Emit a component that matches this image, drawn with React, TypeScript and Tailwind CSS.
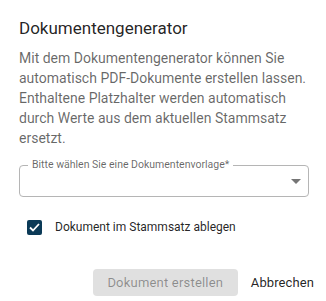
import React from "react";

const App = () => {
  return (
    <div
      className="h-[301px] w-[326px] overflow-hidden bg-white text-[rgba(0,0,0,0.87)]"
      style={{ fontFamily: "Roboto, 'Liberation Sans', sans-serif" }}
    >
      <div className="pl-[19px] pr-[14px] pt-[16px]">
        <h2 className="text-[17px] leading-[24px] font-normal">Dokumentengenerator</h2>

        <p className="mt-[8px] text-[14px] leading-[20px] text-[rgba(0,0,0,0.6)]">
          Mit dem Dokumentengenerator können Sie automatisch PDF-Dokumente erstellen lassen.
          Enthaltene Platzhalter werden automatisch durch Werte aus dem aktuellen Stammsatz
          ersetzt.
        </p>

        {/* Select */}
        <div className="relative mt-[17px] h-[32px] w-[290px] rounded-[4px] border border-[#b5b5b5]">
          <span className="absolute -top-[8px] left-[8px] bg-white px-[4px] text-[10.5px] leading-[14px] text-[rgba(0,0,0,0.6)]">
            Bitte wählen Sie eine Dokumentenvorlage*
          </span>
          <svg
            className="absolute right-[7px] top-[13px]"
            width="10"
            height="5"
            viewBox="0 0 10 5"
          >
            <path d="M0 0 L10 0 L5 5 Z" fill="#757575" />
          </svg>
        </div>

        {/* Checkbox */}
        <label className="mt-[20px] flex h-[20px] items-center pl-[8px]">
          <span className="flex h-[15px] w-[15px] items-center justify-center rounded-[2px] bg-[#0b3a57]">
            <svg width="11" height="9" viewBox="0 0 11 9">
              <path d="M1 4.5 L4 7.5 L10 1" fill="none" stroke="white" strokeWidth="1.8" />
            </svg>
          </span>
          <span className="ml-[13px] text-[12px] leading-[20px]">Dokument im Stammsatz ablegen</span>
        </label>
      </div>

      {/* Actions */}
      <div className="mt-[32px] flex items-center justify-end gap-[5px] pr-[4px]">
        <button
          disabled
          className="h-[27px] w-[145px] rounded-[4px] bg-[#e0e0e0] text-[13px] tracking-[0.2px] text-[rgba(0,0,0,0.38)]"
        >
          Dokument erstellen
        </button>
        <button className="h-[27px] px-[8px] text-[13px] tracking-[0.1px] text-[rgba(0,0,0,0.87)]">
          Abbrechen
        </button>
      </div>
    </div>
  );
};

export default App;
